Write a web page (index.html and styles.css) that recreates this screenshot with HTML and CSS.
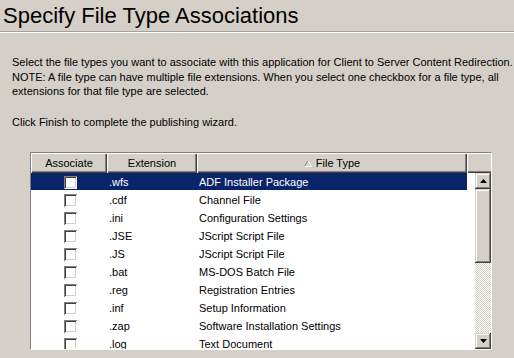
FILE: index.html
```html
<!DOCTYPE html>
<html lang="en">
<head>
    <meta charset="UTF-8">
    <title>Specify File Type Associations</title>
    <link rel="stylesheet" href="styles.css">
</head>
<body>
    <h1 class="head-title">Specify File Type Associations</h1>

    <p class="intro">Select the file types you want to associate with this application for Client to Server Content Redirection. NOTE: A file type can have multiple file extensions. When you select one checkbox for a file type, all extensions for that file type are selected.</p>
    <p class="intro intro-finish">Click Finish to complete the publishing wizard.</p>

    <section class="list-view">
        <div class="list-head">
            <div class="col-head col-assoc">Associate</div>
            <div class="col-head col-ext">Extension</div>
            <div class="col-head col-type">
                <svg class="sort-arrow" width="8" height="7" viewBox="0 0 8 7">
                    <path d="M0.5 6.5 L4 0.5" stroke="#808080" fill="none"/>
                    <path d="M4 0.5 L7.5 6.5 L0.5 6.5" stroke="#ffffff" fill="none"/>
                </svg>
                File Type
            </div>
            <div class="col-head col-rest"></div>
        </div>
        <div class="list-body">
            <ul class="rows">
                <li class="row selected"><span class="cell col-assoc"><span class="check"></span></span><span class="cell col-ext">.wfs</span><span class="cell col-type">ADF Installer Package</span></li>
                <li class="row"><span class="cell col-assoc"><span class="check"></span></span><span class="cell col-ext">.cdf</span><span class="cell col-type">Channel File</span></li>
                <li class="row"><span class="cell col-assoc"><span class="check"></span></span><span class="cell col-ext">.ini</span><span class="cell col-type">Configuration Settings</span></li>
                <li class="row"><span class="cell col-assoc"><span class="check"></span></span><span class="cell col-ext">.JSE</span><span class="cell col-type">JScript Script File</span></li>
                <li class="row"><span class="cell col-assoc"><span class="check"></span></span><span class="cell col-ext">.JS</span><span class="cell col-type">JScript Script File</span></li>
                <li class="row"><span class="cell col-assoc"><span class="check"></span></span><span class="cell col-ext">.bat</span><span class="cell col-type">MS-DOS Batch File</span></li>
                <li class="row"><span class="cell col-assoc"><span class="check"></span></span><span class="cell col-ext">.reg</span><span class="cell col-type">Registration Entries</span></li>
                <li class="row"><span class="cell col-assoc"><span class="check"></span></span><span class="cell col-ext">.inf</span><span class="cell col-type">Setup Information</span></li>
                <li class="row"><span class="cell col-assoc"><span class="check"></span></span><span class="cell col-ext">.zap</span><span class="cell col-type">Software Installation Settings</span></li>
                <li class="row"><span class="cell col-assoc"><span class="check"></span></span><span class="cell col-ext">.log</span><span class="cell col-type">Text Document</span></li>
            </ul>
            <div class="scroll-bar">
                <div class="scroll-btn">
                    <svg width="7" height="4" viewBox="0 0 7 4"><path d="M3.5 0 L7 4 L0 4 Z" fill="#000"/></svg>
                </div>
                <div class="scroll-thumb"></div>
                <div class="scroll-track"></div>
                <div class="scroll-btn">
                    <svg width="7" height="4" viewBox="0 0 7 4"><path d="M0 0 L7 0 L3.5 4 Z" fill="#000"/></svg>
                </div>
            </div>
        </div>
    </section>
</body>
</html>
```

FILE: styles.css
```css
body {
    margin: 0;
    background-color: #d4d0c8;
    font-family: "Liberation Sans", Arial, sans-serif;
    color: #000;
    overflow: hidden;
}

.head-title {
    margin: 0;
    padding-left: 3px;
    height: 31px;
    line-height: 31px;
    font-size: 22px;
    font-weight: normal;
    border-bottom: 1px solid #a0a0a0;
    box-shadow: 0 1px #ffffff;
}

.intro {
    margin: 23px 0 0 12px;
    font-size: 11px;
    line-height: 14.5px;
}

.intro-finish {
    margin-top: 16px;
}

.list-view {
    width: 460px;
    height: 196px;
    margin: 23px 0 0 30px;
    border: 1px solid;
    border-color: #808080 #ffffff #ffffff #808080;
    background-color: #fff;
    font-size: 11px;
    overflow: hidden;
}

.list-head {
    display: flex;
    height: 20px;
    background-color: #d4d0c8;
}

.col-head {
    display: flex;
    align-items: center;
    justify-content: center;
    gap: 4px;
    box-sizing: border-box;
    height: 20px;
    box-shadow: inset 1px 1px #fff, inset -1px -1px #404040, inset -2px -2px #808080;
}

.col-rest {
    flex: 1;
    box-shadow: inset 1px 1px #fff, inset 0 -1px #404040, inset 0 -2px #808080;
}

.col-assoc {
    width: 76px;
}

.col-ext {
    width: 90px;
}

.col-type {
    width: 270px;
}

.list-body {
    display: flex;
    height: 176px;
}

.rows {
    flex: 1;
    margin: 0;
    padding: 0;
    list-style: none;
}

.row {
    display: flex;
    height: 18px;
}

.cell {
    box-sizing: border-box;
    height: 17px;
    line-height: 18px;
    padding-left: 2px;
    white-space: nowrap;
}

.row.selected .cell {
    background-color: #0a246a;
    color: #fff;
}

.cell.col-assoc {
    padding-left: 33px;
}

.check {
    display: block;
    width: 13px;
    height: 13px;
    margin-top: 3px;
    background-color: #fff;
    box-shadow: inset 1px 1px #808080, inset -1px -1px #fff, inset 2px 2px #404040, inset -2px -2px #d4d0c8;
}

.scroll-bar {
    display: flex;
    flex-direction: column;
    width: 16px;
}

.scroll-btn,
.scroll-thumb {
    box-sizing: border-box;
    background-color: #d4d0c8;
    box-shadow: inset -1px -1px #404040, inset 1px 1px #d4d0c8, inset -2px -2px #808080, inset 2px 2px #fff;
}

.scroll-btn {
    display: flex;
    align-items: center;
    justify-content: center;
    height: 16px;
}

.scroll-thumb {
    height: 74px;
}

.scroll-track {
    height: 70px;
    background: repeating-conic-gradient(#fff 0 25%, #d4d0c8 0 50%) 0 0 / 2px 2px;
}
```
